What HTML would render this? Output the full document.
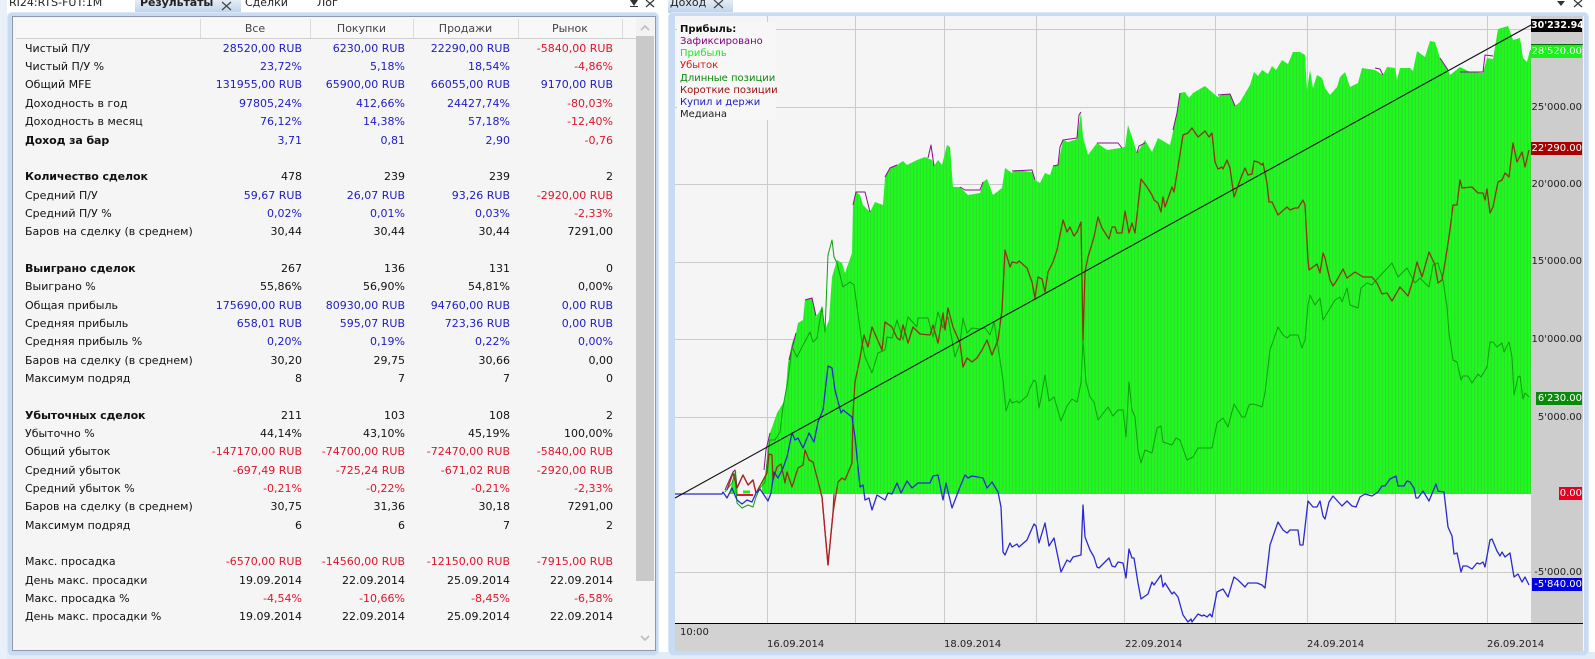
<!DOCTYPE html>
<html><head><meta charset="utf-8"><style>
html,body{margin:0;padding:0;width:1595px;height:659px;overflow:hidden;background:#fff;font-family:"DejaVu Sans","Liberation Sans",sans-serif;font-size:11px;color:#111}
.a{position:absolute;white-space:nowrap}
.frame{position:absolute;background:#c9dbf2;border-radius:5px;border:1px solid #dbe7f6}
.inner{position:absolute;background:#f5f5f5;border:1px solid #8f9aa8;box-sizing:border-box}
.r{position:relative;height:18.35px;line-height:18.35px;width:640px}
.r span{position:absolute;top:0;text-align:right;white-space:nowrap}
.r span:nth-child(1){left:25px;text-align:left}
.r span:nth-child(2){right:338px}
.r span:nth-child(3){right:235px}
.r span:nth-child(4){right:130px}
.r span:nth-child(5){right:27px}
.c{color:#1c1cc4}.e{color:#e0142c}.h{font-weight:bold;letter-spacing:-.1px}
.hd{position:absolute;top:19px;height:19px;line-height:19px;color:#444;text-align:center}
.sep{position:absolute;top:19px;height:19px;width:1px;background:#dcdcdc}
.tag{position:absolute;height:13px;line-height:13px;text-align:right;font-size:10px;box-sizing:border-box;right:13px}
.ax{position:absolute;right:13px;line-height:13px;height:13px;color:#222;font-size:10px}
.d{position:absolute;top:638px;line-height:13px;color:#222;font-size:10px}
</style></head><body>
<div class="a" style="left:0;top:652px;width:1595px;height:7px;background:#e2ecf9"></div>
<div class="a" style="left:0;top:0;width:7px;height:659px;background:#e9f0fa"></div>

<!-- top tabs -->
<div class="a" style="left:9px;top:-4px;line-height:14px;color:#222">RI24:RTS-FUT:1M</div>
<div class="a" style="left:135px;top:0;width:106px;height:13px;background:linear-gradient(#e4edf6,#bcd2e8)"></div>
<div class="a h" style="left:140px;top:-4px;line-height:14px;font-weight:bold;color:#222">Результаты</div>
<svg class="a" style="left:221px;top:1px" width="11" height="10"><path d="M1 1L10 9M10 1L1 9" stroke="#444" stroke-width="1.2" fill="none"/></svg>
<div class="a" style="left:245px;top:-4px;line-height:14px;color:#222">Сделки</div>
<div class="a" style="left:317px;top:-4px;line-height:14px;color:#222">Лог</div>
<svg class="a" style="left:629px;top:0" width="30" height="10"><path d="M1 0H9L5 6Z M1 0H9" fill="#333"/><path d="M1 6.5H9" stroke="#333"/><path d="M17 0L25 7M25 0L17 7" stroke="#333" stroke-width="1.2" fill="none"/></svg>
<div class="a" style="left:668px;top:0;width:65px;height:13px;background:linear-gradient(#e4edf6,#bcd2e8)"></div>
<div class="a" style="left:670px;top:-4px;line-height:14px;color:#222">Доход</div>
<svg class="a" style="left:713px;top:0" width="11" height="10"><path d="M1 0L10 8M10 0L1 8" stroke="#444" stroke-width="1.2" fill="none"/></svg>
<svg class="a" style="left:1556px;top:0" width="30" height="10"><path d="M1 1H9L5 6Z" fill="#333"/><path d="M18 0L26 7M26 0L18 7" stroke="#333" stroke-width="1.2" fill="none"/></svg>

<!-- left panel -->
<div class="frame" style="left:7px;top:12px;width:650px;height:642px"></div>
<div class="inner" style="left:12px;top:16px;width:644px;height:635px"></div>
<div class="a" style="left:16px;top:18px;width:620px;height:20px;background:#f8f8f8;border-bottom:1px solid #cfcfcf"></div>
<div class="sep" style="left:200px"></div><div class="sep" style="left:310px"></div><div class="sep" style="left:413px"></div><div class="sep" style="left:518px"></div><div class="sep" style="left:622px"></div>
<div class="hd" style="left:200px;width:110px">Все</div>
<div class="hd" style="left:310px;width:103px">Покупки</div>
<div class="hd" style="left:413px;width:105px">Продажи</div>
<div class="hd" style="left:518px;width:104px">Рынок</div>
<!-- scrollbar -->
<div class="a" style="left:636px;top:17px;width:18px;height:19px;background:#f3f3f3"></div>
<div class="a" style="left:636px;top:36px;width:18px;height:545px;background:#c9c9c9"></div>
<svg class="a" style="left:639px;top:24px" width="12" height="8"><path d="M2 6L6 2L10 6" stroke="#bdbdbd" stroke-width="1.6" fill="none"/></svg>
<svg class="a" style="left:639px;top:634px" width="12" height="8"><path d="M2 2L6 6L10 2" stroke="#bdbdbd" stroke-width="1.6" fill="none"/></svg>

<div class="a" style="left:0;top:39.8px;white-space:normal">
<div class="r"><span>Чистый П/У</span><span class="c">28520,00 RUB</span><span class="c">6230,00 RUB</span><span class="c">22290,00 RUB</span><span class="e">-5840,00 RUB</span></div>
<div class="r"><span>Чистый П/У %</span><span class="c">23,72%</span><span class="c">5,18%</span><span class="c">18,54%</span><span class="e">-4,86%</span></div>
<div class="r"><span>Общий MFE</span><span class="c">131955,00 RUB</span><span class="c">65900,00 RUB</span><span class="c">66055,00 RUB</span><span class="c">9170,00 RUB</span></div>
<div class="r"><span>Доходность в год</span><span class="c">97805,24%</span><span class="c">412,66%</span><span class="c">24427,74%</span><span class="e">-80,03%</span></div>
<div class="r"><span>Доходность в месяц</span><span class="c">76,12%</span><span class="c">14,38%</span><span class="c">57,18%</span><span class="e">-12,40%</span></div>
<div class="r"><span class="h">Доход за бар</span><span class="c">3,71</span><span class="c">0,81</span><span class="c">2,90</span><span class="e">-0,76</span></div>
<div class="r"></div>
<div class="r"><span class="h">Количество сделок</span><span>478</span><span>239</span><span>239</span><span>2</span></div>
<div class="r"><span>Средний П/У</span><span class="c">59,67 RUB</span><span class="c">26,07 RUB</span><span class="c">93,26 RUB</span><span class="e">-2920,00 RUB</span></div>
<div class="r"><span>Средний П/У %</span><span class="c">0,02%</span><span class="c">0,01%</span><span class="c">0,03%</span><span class="e">-2,33%</span></div>
<div class="r"><span>Баров на сделку (в среднем)</span><span>30,44</span><span>30,44</span><span>30,44</span><span>7291,00</span></div>
<div class="r"></div>
<div class="r"><span class="h">Выиграно сделок</span><span>267</span><span>136</span><span>131</span><span>0</span></div>
<div class="r"><span>Выиграно %</span><span>55,86%</span><span>56,90%</span><span>54,81%</span><span>0,00%</span></div>
<div class="r"><span>Общая прибыль</span><span class="c">175690,00 RUB</span><span class="c">80930,00 RUB</span><span class="c">94760,00 RUB</span><span class="c">0,00 RUB</span></div>
<div class="r"><span>Средняя прибыль</span><span class="c">658,01 RUB</span><span class="c">595,07 RUB</span><span class="c">723,36 RUB</span><span class="c">0,00 RUB</span></div>
<div class="r"><span>Средняя прибыль %</span><span class="c">0,20%</span><span class="c">0,19%</span><span class="c">0,22%</span><span class="c">0,00%</span></div>
<div class="r"><span>Баров на сделку (в среднем)</span><span>30,20</span><span>29,75</span><span>30,66</span><span>0,00</span></div>
<div class="r"><span>Максимум подряд</span><span>8</span><span>7</span><span>7</span><span>0</span></div>
<div class="r"></div>
<div class="r"><span class="h">Убыточных сделок</span><span>211</span><span>103</span><span>108</span><span>2</span></div>
<div class="r"><span>Убыточно %</span><span>44,14%</span><span>43,10%</span><span>45,19%</span><span>100,00%</span></div>
<div class="r"><span>Общий убыток</span><span class="e">-147170,00 RUB</span><span class="e">-74700,00 RUB</span><span class="e">-72470,00 RUB</span><span class="e">-5840,00 RUB</span></div>
<div class="r"><span>Средний убыток</span><span class="e">-697,49 RUB</span><span class="e">-725,24 RUB</span><span class="e">-671,02 RUB</span><span class="e">-2920,00 RUB</span></div>
<div class="r"><span>Средний убыток %</span><span class="e">-0,21%</span><span class="e">-0,22%</span><span class="e">-0,21%</span><span class="e">-2,33%</span></div>
<div class="r"><span>Баров на сделку (в среднем)</span><span>30,75</span><span>31,36</span><span>30,18</span><span>7291,00</span></div>
<div class="r"><span>Максимум подряд</span><span>6</span><span>6</span><span>7</span><span>2</span></div>
<div class="r"></div>
<div class="r"><span>Макс. просадка</span><span class="e">-6570,00 RUB</span><span class="e">-14560,00 RUB</span><span class="e">-12150,00 RUB</span><span class="e">-7915,00 RUB</span></div>
<div class="r"><span>День макс. просадки</span><span>19.09.2014</span><span>22.09.2014</span><span>25.09.2014</span><span>22.09.2014</span></div>
<div class="r"><span>Макс. просадка %</span><span class="e">-4,54%</span><span class="e">-10,66%</span><span class="e">-8,45%</span><span class="e">-6,58%</span></div>
<div class="r"><span>День макс. просадки %</span><span>19.09.2014</span><span>22.09.2014</span><span>25.09.2014</span><span>22.09.2014</span></div>
</div>

<!-- right panel -->
<div class="frame" style="left:668px;top:12px;width:919px;height:642px"></div>
<div class="a" style="left:675px;top:16px;width:909px;height:635px;background:#f5f5f5"></div>
<div class="a" style="left:1531px;top:16px;width:52px;height:607px;background:#cdcdcd"></div>
<div class="a" style="left:675px;top:623px;width:908px;height:28px;background:#d2d2d2"></div>

<svg class="a" style="left:0;top:0" width="1595" height="659">
<defs><pattern id="st" patternUnits="userSpaceOnUse" width="3.3" height="10"><rect width="3.3" height="10" fill="#1cfb1c"/><rect x="2.3" width="1" height="10" fill="#36d436"/></pattern></defs>
<g stroke="#cacaca" fill="none">
<path d="M767.5 16V623M855.5 16V623M944.5 16V623M1036.5 16V623M1124.5 16V623M1215.5 16V623M1307.5 16V623M1395.5 16V623M1487.5 16V623"/>
<path d="M675 29.5H1531M675 107.5H1531M675 184.5H1531M675 262.5H1531M675 339.5H1531M675 417.5H1531M675 572.5H1531"/>
</g>
<path fill="url(#st)" d="M767,494 L767,450 770,433 777,413 785,400 788,363 792,343 796,333 798,323 803,320 805,300 812,298 816,317 822,307 825,330 829,320 832,277 837,260 842,263 845,273 852,253 853,205 856,192 860,195 863,205 870,212 875,202 883,205 885,177 890,168 897,165 903,161 907,165 917,160 925,157 932,160 934,166 938,160 942,165 947,145 950,147 953,187 960,187 968,195 980,193 983,182 987,179 993,195 1002,188 1005,168 1012,173 1015,170 1032,172 1035,180 1040,183 1045,173 1050,175 1053,166 1058,165 1063,140 1068,142 1077,139 1081,112 1083,137 1088,155 1097,143 1107,150 1120,148 1125,147 1128,125 1132,137 1137,153 1145,140 1152,152 1158,138 1170,145 1177,113 1180,93 1185,92 1189,98 1193,93 1205,86 1213,93 1218,97 1223,94 1230,94 1235,106 1240,102 1250,85 1254,72 1258,76 1262,70 1268,74 1272,66 1276,70 1282,60 1288,64 1293,52 1300,52 1305,55 1307,90 1310,70 1313,88 1317,75 1322,78 1325,88 1330,95 1337,87 1340,77 1345,72 1350,87 1358,83 1362,68 1375,70 1383,75 1387,67 1395,68 1397,80 1400,68 1410,68 1413,71 1417,51 1425,57 1430,41 1435,42 1440,58 1448,70 1450,75 1460,67 1470,72 1483,73 1487,58 1493,59 1498,29 1508,26 1513,40 1520,38 1523,58 1527,62 1530,50 1531,50 L1531,494 Z M729,494 L733,480 736,470 738,494 Z M762,494 L762,482 767,472 767,494 Z"/>
<g fill="none" stroke-width="1" stroke-linejoin="round">
<path stroke="#8a108a" d="M789,360L796,333M805,300L812,298L816,316M853,205L856,192L865,192L870,212M885,177L890,168L897,165M928,158L931,145L934,166M960,187L965,190L980,190L983,182M1012,171L1032,170L1035,180M1053,166L1058,165L1060,147L1063,140L1077,138L1079,115L1081,112M1097,143L1118,143L1122,148M1137,153L1139,146L1145,143M1173,130L1177,113L1180,93M1218,95L1230,94L1235,106M1375,68L1380,69L1383,75M1440,58L1448,70M1460,72L1483,72L1485,55L1493,56M725,490L733,472L735,470L737,488M764,470L766,450L770,433"/>
<path stroke="#0ca00c" d="M725,492L732,483L735,473L737,503L742,508L748,505L753,507L756,497L760,488L765,482L767,462L770,440L775,440L780,432L783,407L788,380L792,347L797,357L802,347L810,332L813,342L817,338L822,307L825,332L828,255L832,240L834,257L837,263L843,287L850,282L854,285L862,343L865,357L872,373L878,353L885,350L887,337L892,338L897,320L903,340L908,317L917,327L918,318L928,318L933,337L938,312L943,328L948,317L955,357L960,343L963,318L967,333L972,328L980,329L985,328L990,335L994,322L1000,360L1003,380L1006,411L1010,399L1012,403L1017,401L1019,403L1027,396L1030,388L1034,380L1036,382L1039,408L1041,398L1045,375L1049,401L1054,397L1061,421L1067,406L1072,399L1077,402L1081,383L1083,340L1086,382L1090,397L1094,402L1098,420L1108,407L1113,416L1118,410L1123,410L1126,437L1129,382L1132,410L1135,417L1138,450L1141,463L1145,450L1152,453L1157,428L1161,426L1163,442L1172,445L1176,438L1180,440L1187,460L1193,457L1198,448L1212,448L1217,423L1223,418L1228,427L1234,404L1242,417L1245,417L1249,405L1252,404L1257,405L1262,407L1265,393L1270,350L1278,327L1283,335L1287,338L1290,335L1298,335L1302,348L1305,340L1308,305L1310,295L1315,305L1320,298L1323,320L1335,300L1340,297L1342,302L1347,288L1350,305L1358,308L1361,288L1367,283L1372,285L1378,278L1392,263L1398,277L1407,268L1415,283L1420,278L1429,287L1433,265L1438,263L1443,280L1447,307L1449,333L1453,360L1457,362L1461,380L1463,376L1468,376L1472,383L1478,374L1481,377L1487,367L1490,342L1493,342L1497,347L1502,343L1504,352L1509,342L1512,357L1514,395L1518,377L1520,376L1523,399L1525,393L1529,397"/>
<path stroke="#8f3410" stroke-width="1.3" d="M727,490L733,473L737,488L743,475L748,485L753,480L756,493L762,482L767,473L769,454L772,455L773,480L777,467L781,464L785,483L787,472L792,487L798,468L803,465L805,450L809,460L813,462L819,485L822,497L828,565L833,513L838,482L842,478L845,480L852,463L853,413L855,382L860,358L864,335L868,347L872,327L882,350L885,322L892,327L897,338L900,340L903,325L908,343L913,327L920,334L930,335L933,325L938,343L943,313L945,330L948,308L953,327L960,343L963,367L967,358L972,362L977,358L982,350L987,340L992,355L998,340L1002,310L1005,250L1010,267L1012,262L1017,263L1019,261L1027,268L1032,282L1035,298L1038,277L1042,279L1045,292L1048,272L1053,262L1057,250L1063,220L1067,232L1070,227L1074,236L1077,232L1081,222L1083,340L1085,272L1088,257L1094,237L1098,217L1102,228L1109,239L1112,227L1115,227L1117,233L1122,233L1125,211L1129,233L1132,223L1135,233L1141,179L1147,187L1152,195L1154,200L1158,203L1161,212L1163,197L1165,207L1172,187L1174,192L1178,167L1183,135L1188,133L1192,128L1198,137L1205,131L1209,137L1212,133L1215,162L1218,169L1222,167L1223,169L1227,160L1230,168L1234,197L1242,175L1245,168L1248,175L1252,174L1254,161L1258,162L1262,165L1263,163L1267,183L1269,202L1272,202L1278,215L1287,207L1290,210L1295,208L1298,208L1303,200L1305,205L1308,260L1309,270L1317,264L1320,273L1323,253L1325,258L1330,280L1333,286L1337,280L1343,269L1347,278L1355,272L1363,277L1372,277L1377,283L1382,294L1387,293L1392,301L1400,287L1408,296L1413,280L1417,262L1422,277L1429,252L1435,265L1438,283L1442,280L1445,263L1450,230L1453,205L1457,205L1460,180L1462,188L1472,187L1478,193L1483,193L1485,200L1487,189L1490,213L1493,207L1498,182L1502,180L1505,173L1509,177L1513,143L1517,162L1522,152L1525,167L1529,150"/>
<path stroke="#b02028" stroke-width="1.3" d="M737,488L743,475L748,485L753,480L756,493M821,494L822,497L828,565L833,513L834,494"/>
<path stroke="#2a2ad0" stroke-width="1.3" d="M675,494L722,494L723,492L727,498L732,488L737,500L742,504L747,500L752,502L756,493L760,489L768,501L771,493L774,472L778,478L783,468L787,457L792,433L795,440L798,438L803,448L809,433L814,442L818,422L823,410L828,366L832,368L835,390L841,413L843,410L852,417L855,437L860,487L863,485L865,500L869,498L872,510L877,495L885,500L888,493L892,494L897,483L901,493L907,481L912,488L918,483L930,483L933,476L938,475L943,500L946,483L952,508L960,487L965,475L968,478L972,476L983,478L987,488L992,482L998,492L1001,507L1003,552L1005,555L1010,543L1012,547L1017,544L1019,547L1027,540L1030,533L1034,524L1036,526L1039,543L1045,523L1049,546L1054,538L1061,572L1067,560L1070,562L1073,557L1081,555L1083,505L1085,537L1090,550L1094,557L1097,567L1099,568L1109,558L1112,566L1115,567L1118,562L1123,563L1126,578L1129,549L1132,558L1134,558L1138,583L1141,599L1148,594L1152,582L1154,585L1161,575L1163,587L1165,583L1172,594L1174,592L1178,597L1183,615L1188,622L1191,619L1192,622L1198,614L1202,616L1204,615L1207,617L1210,614L1212,617L1217,592L1223,589L1228,597L1234,577L1238,580L1245,587L1248,583L1257,583L1262,585L1265,588L1270,545L1278,522L1283,530L1287,533L1290,530L1298,530L1300,545L1303,545L1308,501L1313,507L1317,507L1320,501L1323,516L1325,519L1329,502L1333,496L1342,506L1347,501L1352,506L1356,507L1360,497L1365,494L1372,496L1378,492L1382,486L1385,486L1390,479L1396,476L1398,486L1404,486L1407,481L1410,482L1414,488L1416,498L1418,498L1423,491L1429,501L1436,484L1438,491L1444,492L1448,527L1452,536L1454,554L1457,553L1461,572L1463,566L1467,566L1472,569L1477,563L1480,564L1483,562L1485,567L1490,540L1492,539L1497,551L1500,556L1502,552L1505,557L1510,553L1514,577L1518,574L1522,582L1525,577L1529,585"/>
<path stroke="#ee1030" stroke-width="2" d="M737,495H753"/>
<path stroke="#1cf01c" stroke-width="3" d="M743,492H750"/>
<path stroke="#111" stroke-width="1.1" d="M675,498L1531,25"/>
</g>
<rect x="677" y="22" width="99" height="98" fill="#f7f7f7"/>
<path stroke="#000" d="M675 623.5H1583"/>
<rect x="1531" y="44" width="52" height="1" fill="#0a6a0a"/>
</svg>

<!-- legend -->
<div class="a" style="left:680px;top:24px;font-size:10px;line-height:12px;white-space:nowrap">
<div style="font-weight:bold;color:#111">Прибыль:</div>
<div style="color:#800080">Зафиксировано</div>
<div style="color:#1ee81e">Прибыль</div>
<div style="color:#e01010">Убыток</div>
<div style="color:#0a8a0a;margin-top:1px">Длинные позиции</div>
<div style="color:#a01010">Короткие позиции</div>
<div style="color:#1c1cc4">Купил и держи</div>
<div style="color:#222">Медиана</div>
</div>

<!-- axis labels -->
<div class="tag" style="top:19px;width:51px;background:#000;color:#fff;font-weight:bold;font-size:9.5px">30'232.94</div>
<div class="tag" style="top:45px;width:51px;background:#1cf01c;color:#fff">28'520.00</div>
<div class="ax" style="top:101px">25'000.00</div>
<div class="tag" style="top:142px;width:51px;background:#a80000;color:#fff">22'290.00</div>
<div class="ax" style="top:178px">20'000.00</div>
<div class="ax" style="top:255px">15'000.00</div>
<div class="ax" style="top:333px">10'000.00</div>
<div class="tag" style="top:392px;width:46px;background:#0a8a0a;color:#fff">6'230.00</div>
<div class="ax" style="top:411px">5'000.00</div>
<div class="tag" style="top:487px;width:23px;background:#e60020;color:#fff">0.00</div>
<div class="ax" style="top:566px">-5'000.00</div>
<div class="tag" style="top:578px;width:50px;background:#0000e0;color:#fff">-5'840.00</div>

<div class="d" style="left:680px;top:626px">10:00</div>
<div class="d" style="left:767px">16.09.2014</div>
<div class="d" style="left:944px">18.09.2014</div>
<div class="d" style="left:1125px">22.09.2014</div>
<div class="d" style="left:1307px">24.09.2014</div>
<div class="d" style="left:1487px">26.09.2014</div>
</body></html>
